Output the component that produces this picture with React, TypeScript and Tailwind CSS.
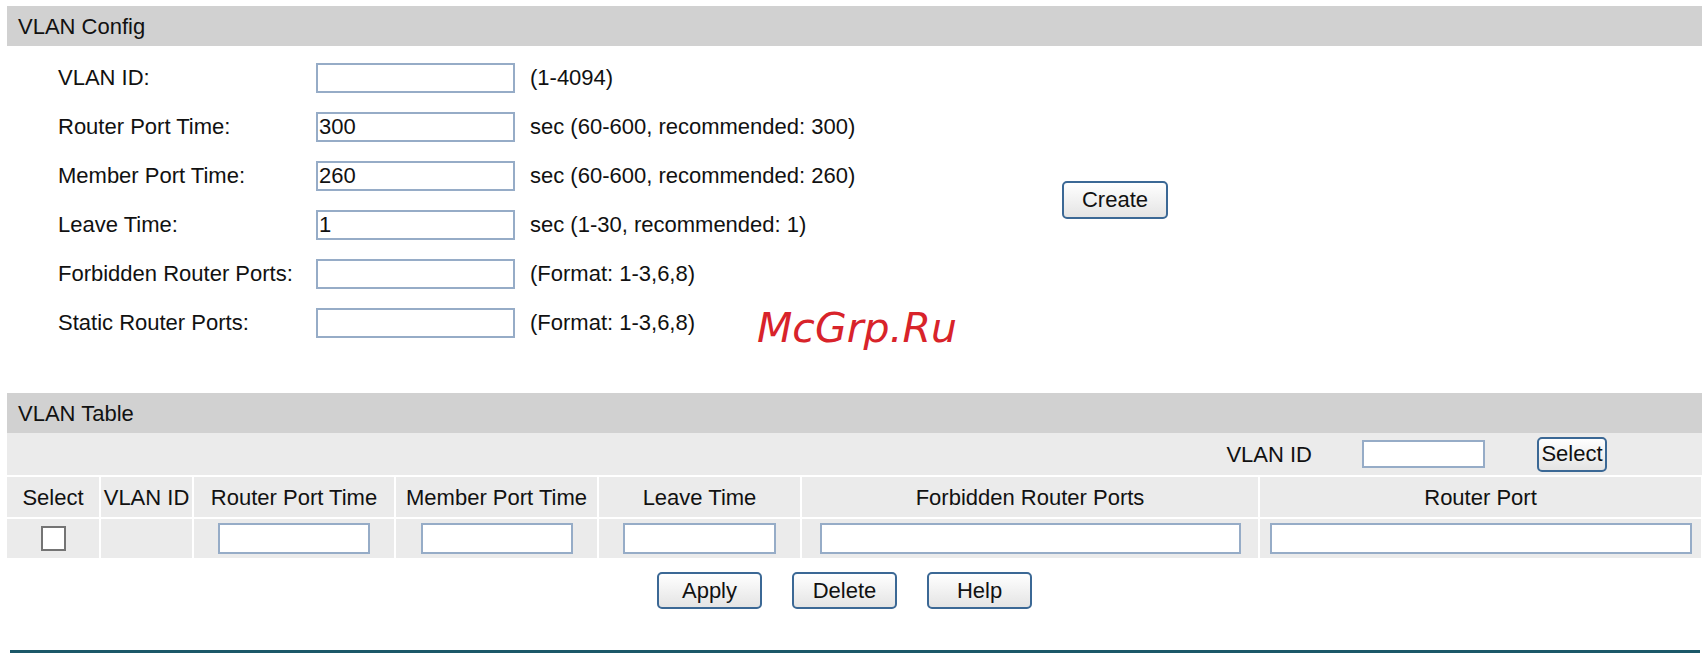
import type { ReactNode } from "react";

const configRows = [
  { label: "VLAN ID:", value: "", hint: "(1-4094)" },
  { label: "Router Port Time:", value: "300", hint: "sec (60-600, recommended: 300)" },
  { label: "Member Port Time:", value: "260", hint: "sec (60-600, recommended: 260)" },
  { label: "Leave Time:", value: "1", hint: "sec (1-30, recommended: 1)" },
  { label: "Forbidden Router Ports:", value: "", hint: "(Format: 1-3,6,8)" },
  { label: "Static Router Ports:", value: "", hint: "(Format: 1-3,6,8)" },
];

const columns = ["Select", "VLAN ID", "Router Port Time", "Member Port Time", "Leave Time", "Forbidden Router Ports", "Router Port"];

function TextBox({ value = "", className = "" }: { value?: string; className?: string }) {
  return (
    <input
      readOnly
      value={value}
      className={`h-[30px] border-2 border-[#96acc7] bg-white px-px text-[22px] leading-none text-[#111] outline-none ${className}`}
    />
  );
}

function Btn({ children, className = "" }: { children: ReactNode; className?: string }) {
  return (
    <button
      className={`rounded-[5px] border-2 border-[#3b6895] bg-linear-to-b from-white to-[#e4e4e4] text-[22px] leading-none text-[#111] ${className}`}
    >
      {children}
    </button>
  );
}

function SectionBar({ title }: { title: string }) {
  return <div className="flex h-[40px] items-center bg-[#d1d1d1] pl-[11px] text-[22px] text-[#111]">{title}</div>;
}

export default function App() {
  return (
    <div className="relative h-[656px] w-[1703px] overflow-hidden bg-white pl-[7px] pr-px pt-[6px] font-['Liberation_Sans',Arial,sans-serif] text-[#111]">
      <SectionBar title="VLAN Config" />

      <div className="flex items-center pt-[7px]">
        <div className="w-[1055px] pl-[51px]">
          {configRows.map((row) => (
            <div key={row.label} className="flex h-[49px] items-center text-[22px]">
              <span className="w-[258px]">{row.label}</span>
              <TextBox value={row.value} className="w-[199px]" />
              <span className="ml-[15px]">{row.hint}</span>
            </div>
          ))}
        </div>
        <Btn className="h-[38px] w-[106px]">Create</Btn>
      </div>

      <div className="mt-[46px]">
        <SectionBar title="VLAN Table" />
        <div className="flex flex-col gap-[2px] text-[22px]">
          <div className="flex h-[42px] items-center justify-end bg-[#ebebeb] pr-[95px]">
            <span>VLAN ID</span>
            <TextBox className="ml-[50px] !h-[28px] w-[123px]" />
            <Btn className="ml-[52px] h-[35px] w-[70px]">Select</Btn>
          </div>
          <div className="grid grid-cols-[92px_91px_200px_201px_201px_456px_441px] grid-rows-[40px_39px] gap-[2px]">
            {columns.map((col) => (
              <div key={col} className="flex items-center justify-center bg-[#ebebeb] whitespace-nowrap">
                {col}
              </div>
            ))}
            <div className="flex items-center justify-center bg-[#ebebeb]">
              <span className="h-[25px] w-[25px] border-2 border-[#747474] bg-white" />
            </div>
            <div className="bg-[#ebebeb]" />
            <div className="flex items-center justify-center bg-[#ebebeb]">
              <TextBox className="!h-[31px] w-[152px]" />
            </div>
            <div className="flex items-center justify-center bg-[#ebebeb]">
              <TextBox className="!h-[31px] w-[152px]" />
            </div>
            <div className="flex items-center justify-center bg-[#ebebeb]">
              <TextBox className="!h-[31px] w-[153px]" />
            </div>
            <div className="flex items-center justify-center bg-[#ebebeb]">
              <TextBox className="!h-[31px] w-[421px]" />
            </div>
            <div className="flex items-center justify-center bg-[#ebebeb]">
              <TextBox className="!h-[31px] w-[422px]" />
            </div>
          </div>
        </div>
      </div>

      <div className="mt-[14px] flex gap-[30px] pl-[650px]">
        <Btn className="h-[37px] w-[105px]">Apply</Btn>
        <Btn className="h-[37px] w-[105px]">Delete</Btn>
        <Btn className="h-[37px] w-[105px]">Help</Btn>
      </div>

      <div className="ml-[3px] mr-[2px] mt-[41px] h-[3px] bg-[#1b5868]" />

      {/* watermark */}
      <span className="absolute left-[757px] top-[308px] font-['DejaVu_Sans',sans-serif] text-[41px] leading-none italic text-[#d8232a]">
        McGrp.Ru
      </span>
    </div>
  );
}
